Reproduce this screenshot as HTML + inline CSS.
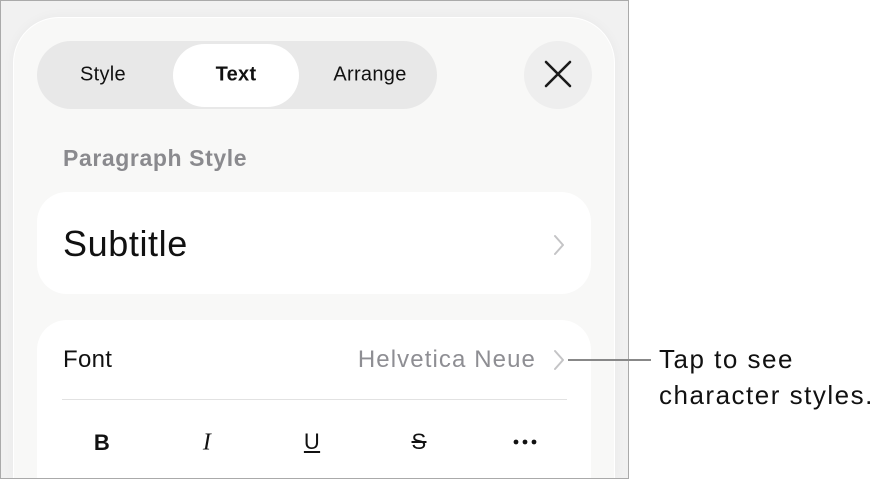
<!DOCTYPE html>
<html><head><style>
html,body{margin:0;width:884px;height:480px;overflow:hidden}
body{background:#fff;position:relative;font-family:"Liberation Sans",sans-serif}
.frame{position:absolute;left:0;top:0;width:627px;height:477px;border:1px solid #aaa;background:#f1f1f1;overflow:hidden}
.panel{position:absolute;left:12px;top:16px;width:600px;height:460px;border-radius:46px 46px 0 0;background:#f8f8f7;border:1px solid #fff;border-bottom:none;box-shadow:0 0 12px rgba(0,0,0,0.04)}
.seg{position:absolute;left:36px;top:40px;width:400px;height:68px;border-radius:34px;background:#e8e8e8}
.sel{position:absolute;left:172px;top:43px;width:126px;height:63px;border-radius:32px;background:#fff}
.t{position:absolute;font-size:20px;color:#111;transform:translate(-50%,-50%);letter-spacing:0.3px;white-space:nowrap}
.close{position:absolute;left:523px;top:40px;width:68px;height:68px;border-radius:50%;background:#eeeeee}
.card{position:absolute;left:36px;width:554px;background:#fff;border-radius:30px}
.chev{position:absolute}
</style></head><body>
<div class="frame">
<div class="panel"></div>
<div class="seg"></div>
<div class="sel"></div>
<div class="t" style="left:102px;top:74px">Style</div>
<div class="t" style="left:235px;top:74px;font-weight:bold">Text</div>
<div class="t" style="left:369px;top:74px">Arrange</div>
<div class="close"></div>
<svg style="position:absolute;left:543px;top:59px" width="28" height="28"><path d="M2 2L26 26M26 2L2 26" stroke="#1a1a1a" stroke-width="2.6" stroke-linecap="round"/></svg>
<div style="position:absolute;left:62px;top:144px;font-size:23px;font-weight:bold;color:#8a8a8e;letter-spacing:0.6px">Paragraph Style</div>
<div class="card" style="top:191px;height:102px"></div>
<div style="position:absolute;left:62px;top:222px;font-size:36px;color:#111;letter-spacing:0.6px">Subtitle</div>
<svg class="chev" style="left:551px;top:233px" width="14" height="22"><path d="M3 2L11 11L3 20" fill="none" stroke="#c4c4c6" stroke-width="2" stroke-linecap="round" stroke-linejoin="round"/></svg>
<div class="card" style="top:319px;height:158px;border-radius:30px 30px 0 0"></div>
<div style="position:absolute;left:62px;top:345px;font-size:24px;color:#111;letter-spacing:0.3px">Font</div>
<div style="position:absolute;right:92px;top:345px;font-size:24px;color:#8e8e93;letter-spacing:1.1px">Helvetica Neue</div>
<svg class="chev" style="left:551px;top:348px" width="14" height="22"><path d="M3 2L11 11L3 20" fill="none" stroke="#c4c4c6" stroke-width="2" stroke-linecap="round" stroke-linejoin="round"/></svg>
<div style="position:absolute;left:61px;top:398px;width:505px;height:1px;background:#e2e2e2"></div>
<div class="t" style="left:101px;top:442px;font-size:22px;font-weight:bold">B</div>
<div class="t" style="left:206px;top:442px;font-size:24px;font-style:italic;font-family:'Liberation Serif',serif">I</div>
<div class="t" style="left:311px;top:441px;font-size:22px;text-decoration:underline">U</div>
<div class="t" style="left:418px;top:441px;font-size:22px;text-decoration:line-through">S</div>
<svg style="position:absolute;left:512px;top:437px" width="24" height="8"><circle cx="3" cy="4" r="2.4" fill="#111"/><circle cx="12" cy="4" r="2.4" fill="#111"/><circle cx="21" cy="4" r="2.4" fill="#111"/></svg>
</div>
<div style="position:absolute;left:568px;top:359px;width:83px;height:1.5px;background:#888"></div>
<div style="position:absolute;left:659px;top:341px;font-size:26px;color:#111;line-height:36px;letter-spacing:1.5px;white-space:nowrap">Tap to see<br>character styles.</div>
</body></html>
